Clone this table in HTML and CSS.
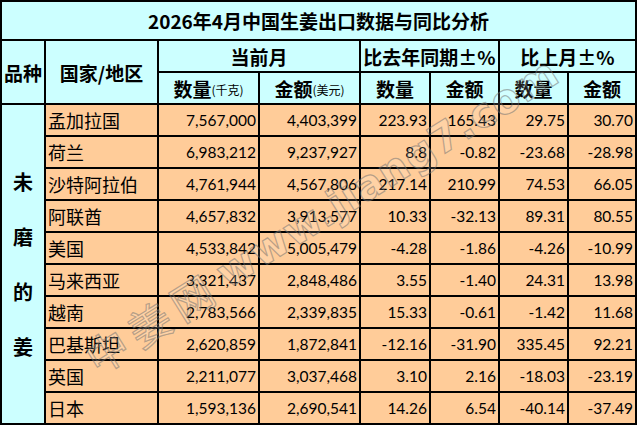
FILE: index.html
```html
<!DOCTYPE html>
<html lang="zh-CN">
<head>
<meta charset="utf-8">
<title>2026年4月中国生姜出口数据与同比分析</title>
<link rel="stylesheet" href="styles.css">
</head>
<body>
<div class="sheet">
  <div class="grid">
    <div class="cell title">2026年4月中国生姜出口数据与同比分析</div>

    <div class="cell head kind">品种</div>
    <div class="cell head country">国家/地区</div>
    <div class="cell head grp1">当前月</div>
    <div class="cell head grp2">比去年同期±%</div>
    <div class="cell head grp3">比上月±%</div>

    <div class="cell head sub">数量<small>(千克)</small></div>
    <div class="cell head sub">金额<small>(美元)</small></div>
    <div class="cell head sub">数量</div>
    <div class="cell head sub">金额</div>
    <div class="cell head sub">数量</div>
    <div class="cell head sub">金额</div>

    <div class="cell side"><span>未</span><span>磨</span><span>的</span><span>姜</span></div>

    <div class="cell name">孟加拉国</div><div class="cell num">7,567,000</div><div class="cell num">4,403,399</div><div class="cell num">223.93</div><div class="cell num">165.43</div><div class="cell num">29.75</div><div class="cell num">30.70</div>
    <div class="cell name">荷兰</div><div class="cell num">6,983,212</div><div class="cell num">9,237,927</div><div class="cell num">8.8</div><div class="cell num">-0.82</div><div class="cell num">-23.68</div><div class="cell num">-28.98</div>
    <div class="cell name">沙特阿拉伯</div><div class="cell num">4,761,944</div><div class="cell num">4,567,806</div><div class="cell num">217.14</div><div class="cell num">210.99</div><div class="cell num">74.53</div><div class="cell num">66.05</div>
    <div class="cell name">阿联酋</div><div class="cell num">4,657,832</div><div class="cell num">3,913,577</div><div class="cell num">10.33</div><div class="cell num">-32.13</div><div class="cell num">89.31</div><div class="cell num">80.55</div>
    <div class="cell name">美国</div><div class="cell num">4,533,842</div><div class="cell num">5,005,479</div><div class="cell num">-4.28</div><div class="cell num">-1.86</div><div class="cell num">-4.26</div><div class="cell num">-10.99</div>
    <div class="cell name">马来西亚</div><div class="cell num">3,321,437</div><div class="cell num">2,848,486</div><div class="cell num">3.55</div><div class="cell num">-1.40</div><div class="cell num">24.31</div><div class="cell num">13.98</div>
    <div class="cell name">越南</div><div class="cell num">2,783,566</div><div class="cell num">2,339,835</div><div class="cell num">15.33</div><div class="cell num">-0.61</div><div class="cell num">-1.42</div><div class="cell num">11.68</div>
    <div class="cell name">巴基斯坦</div><div class="cell num">2,620,859</div><div class="cell num">1,872,841</div><div class="cell num">-12.16</div><div class="cell num">-31.90</div><div class="cell num">335.45</div><div class="cell num">92.21</div>
    <div class="cell name">英国</div><div class="cell num">2,211,077</div><div class="cell num">3,037,468</div><div class="cell num">3.10</div><div class="cell num">2.16</div><div class="cell num">-18.03</div><div class="cell num">-23.19</div>
    <div class="cell name">日本</div><div class="cell num">1,593,136</div><div class="cell num">2,690,541</div><div class="cell num">14.26</div><div class="cell num">6.54</div><div class="cell num">-40.14</div><div class="cell num">-37.49</div>
  </div>
  <div class="watermark"><span class="wm-cn">中姜网</span><span class="wm-en">www.jiang7.com</span></div>
</div>
</body>
</html>
```

FILE: styles.css
```css
html, body {
  margin: 0;
  padding: 0;
  background: #fff;
}

.sheet {
  position: relative;
  width: 637px;
  height: 425px;
  overflow: hidden;
}

.grid {
  display: grid;
  grid-template-columns: 42px 111px 99px 99px 68px 67px 67px 66px;
  grid-template-rows: 37px 30px 30px repeat(10, 30px);
  gap: 2px;
  padding: 2px;
  background: #000;
  width: 637px;
  box-sizing: border-box;
  font-family: "Noto Sans CJK SC", sans-serif;
  color: #000;
}

.cell {
  display: flex;
  align-items: center;
  overflow: hidden;
  white-space: nowrap;
}

.title {
  grid-column: 1 / 9;
  background: #ccffff;
  justify-content: center;
  font-weight: bold;
  font-size: 19px;
}

.head {
  background: #ccffff;
  justify-content: center;
  font-weight: bold;
  font-size: 19px;
}

.kind { grid-column: 1; grid-row: 2 / 4; }
.country { grid-column: 2; grid-row: 2 / 4; }
.grp1 { grid-column: 3 / 5; }
.grp2 { grid-column: 5 / 7; }
.grp3 { grid-column: 7 / 9; }

.sub small {
  font-size: 12px;
  font-weight: normal;
  margin-top: 3px;
}

.side {
  grid-column: 1;
  grid-row: 4 / 14;
  background: #ccffff;
  flex-direction: column;
  justify-content: center;
  font-weight: bold;
  font-size: 20px;
}

.side span {
  display: block;
  height: 55px;
  line-height: 55px;
}

.name {
  background: #ffcc99;
  font-size: 18px;
  padding-left: 2px;
}

.num {
  background: #ffcc99;
  justify-content: flex-end;
  padding-right: 2px;
  font-family: "Lato", "Open Sans", sans-serif;
  font-size: 15.5px;
}

.watermark {
  position: absolute;
  left: 88px;
  top: 332px;
  height: 56px;
  display: flex;
  align-items: center;
  gap: 6px;
  white-space: nowrap;
  transform-origin: 0 50%;
  transform: rotate(-32deg);
  pointer-events: none;
}

.wm-cn,
.wm-en {
  color: rgba(255, 255, 255, 0.15);
  -webkit-text-stroke: 1.2px rgba(110, 110, 110, 0.5);
}

.wm-cn {
  font-family: "Noto Sans CJK SC", sans-serif;
  font-size: 42px;
  letter-spacing: 8px;
}

.wm-en {
  font-family: "DejaVu Sans", sans-serif;
  font-weight: bold;
  font-size: 41px;
  letter-spacing: 1px;
}
```
